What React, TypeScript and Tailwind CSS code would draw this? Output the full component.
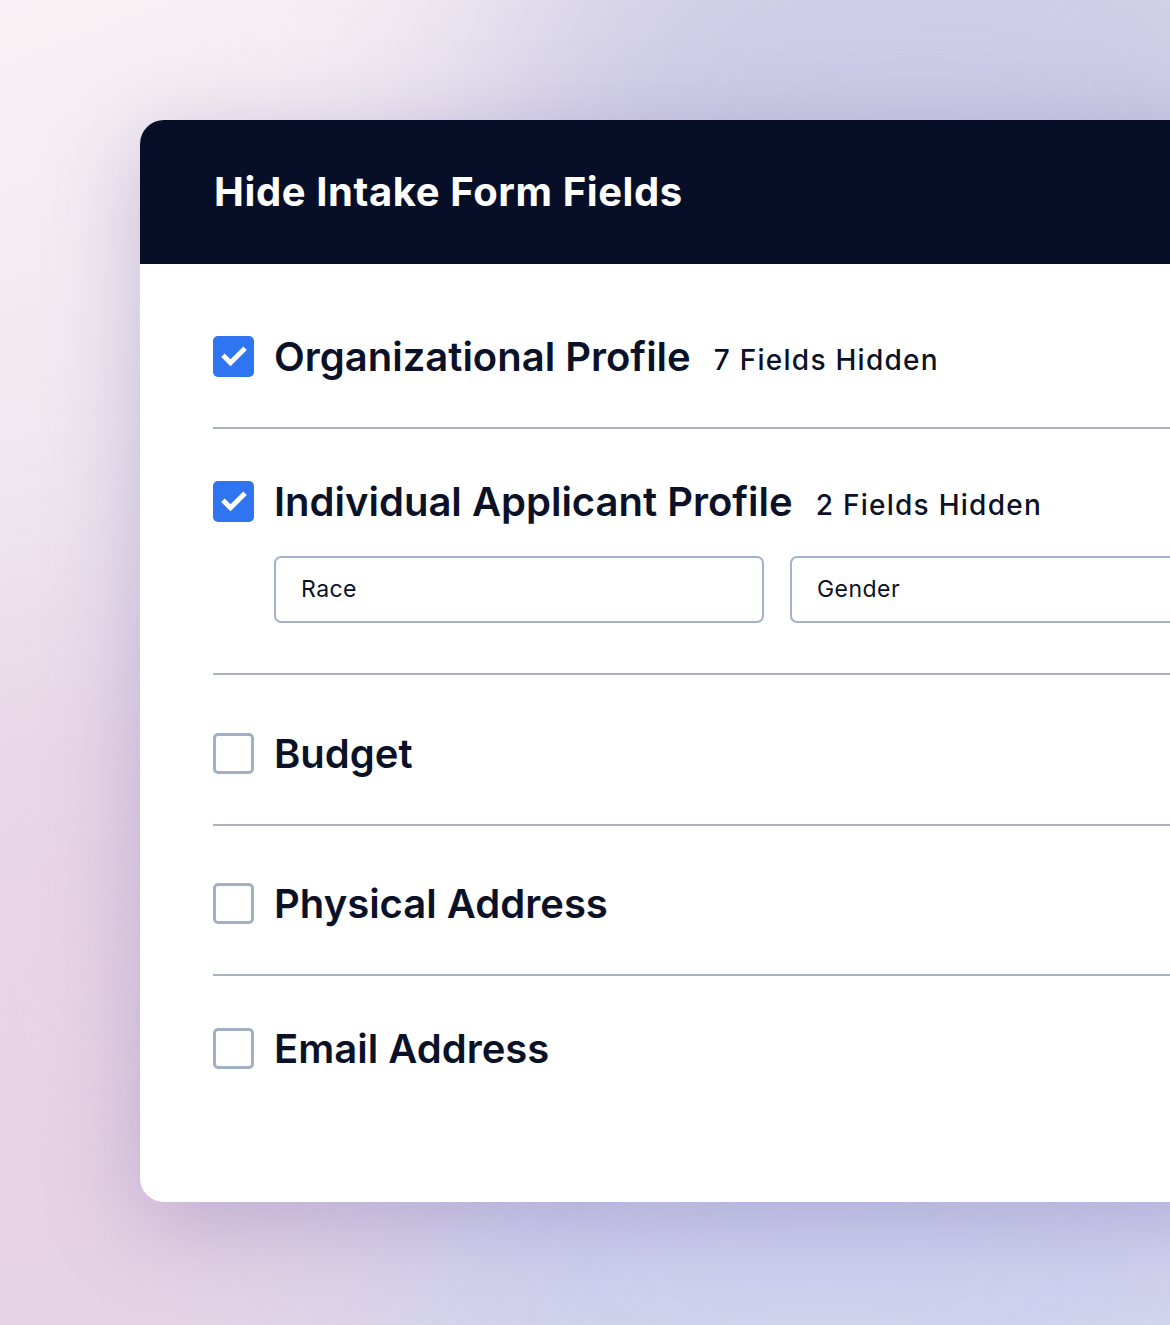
import { Check } from 'lucide-react'

const FONT = { fontFamily: 'Inter, "Noto Sans", sans-serif' }

function Box({ checked }: { checked: boolean }) {
  if (checked) {
    return (
      <div className="w-[41px] h-[41px] rounded-[5px] bg-[#2f74f0] flex items-center justify-center flex-shrink-0">
        <Check className="w-[28px] h-[28px] text-white" strokeWidth={4.2} strokeLinecap="square" strokeLinejoin="miter" />
      </div>
    )
  }
  return <div className="w-[41px] h-[41px] rounded-[5px] border-[3px] border-[#a2b0c6] bg-white flex-shrink-0" />
}

function Row({ label, checked, hidden }: { label: string; checked: boolean; hidden?: string }) {
  return (
    <div className="flex items-center h-[41px]">
      <Box checked={checked} />
      <span className="ml-[20px] text-[40px] font-semibold text-[#0b1228] tracking-normal whitespace-nowrap leading-none">
        {label}
      </span>
      {hidden && (
        <span className="ml-[23px] mt-[6px] text-[28px] font-medium text-[#0b1228] tracking-[0.045em] whitespace-nowrap leading-none">
          {hidden}
        </span>
      )}
    </div>
  )
}

function Field({ label }: { label: string }) {
  return (
    <div className="w-[490px] h-[67px] flex-shrink-0 rounded-[7px] border-2 border-[#a5b1c6] bg-white flex items-center px-[25px] text-[23px] text-[#0b1228] tracking-[0.02em]">
      {label}
    </div>
  )
}

export default function App() {
  return (
    <div
      style={FONT}
      className="relative w-[1170px] h-[1325px] overflow-hidden bg-[linear-gradient(160deg,#f9f1f4_0%,#ece3ee_40%,#e4d2e2_70%,#e2dcef_100%)]"
    >
      <div className="absolute -right-[200px] -top-[200px] w-[900px] h-[700px] rounded-full bg-[#c4c4e4] blur-[120px] opacity-80" />
      <div className="absolute -right-[150px] -bottom-[200px] w-[1000px] h-[500px] rounded-full bg-[#cdd1ef] blur-[120px] opacity-90" />
      <div className="absolute -left-[200px] bottom-[0px] w-[600px] h-[700px] rounded-full bg-[#e8d2e4] blur-[120px] opacity-80" />

      <div className="relative pt-[120px] pl-[140px]">
        <div className="w-[1100px] h-[1082px] bg-white rounded-l-[24px] overflow-hidden shadow-[0_20px_90px_rgba(110,95,170,0.35)]">
          <div className="h-[144px] bg-[#070f28] flex items-center pl-[74px]">
            <h1 className="text-[40px] font-bold text-white tracking-[0.015em] leading-none">Hide Intake Form Fields</h1>
          </div>

          <div className="pl-[73px]">
            <div className="pt-[72px] pb-[50px] border-b-2 border-[#a9b3c4]">
              <Row label="Organizational Profile" checked hidden="7 Fields Hidden" />
            </div>

            <div className="pt-[52px] pb-[50px] border-b-2 border-[#a9b3c4]">
              <Row label="Individual Applicant Profile" checked hidden="2 Fields Hidden" />
              <div className="flex gap-[26px] mt-[34px] pl-[61px]">
                <Field label="Race" />
                <Field label="Gender" />
              </div>
            </div>

            <div className="pt-[58px] pb-[50px] border-b-2 border-[#a9b3c4]">
              <Row label="Budget" checked={false} />
            </div>

            <div className="pt-[57px] pb-[50px] border-b-2 border-[#a9b3c4]">
              <Row label="Physical Address" checked={false} />
            </div>

            <div className="pt-[52px]">
              <Row label="Email Address" checked={false} />
            </div>
          </div>
        </div>
      </div>
    </div>
  )
}
